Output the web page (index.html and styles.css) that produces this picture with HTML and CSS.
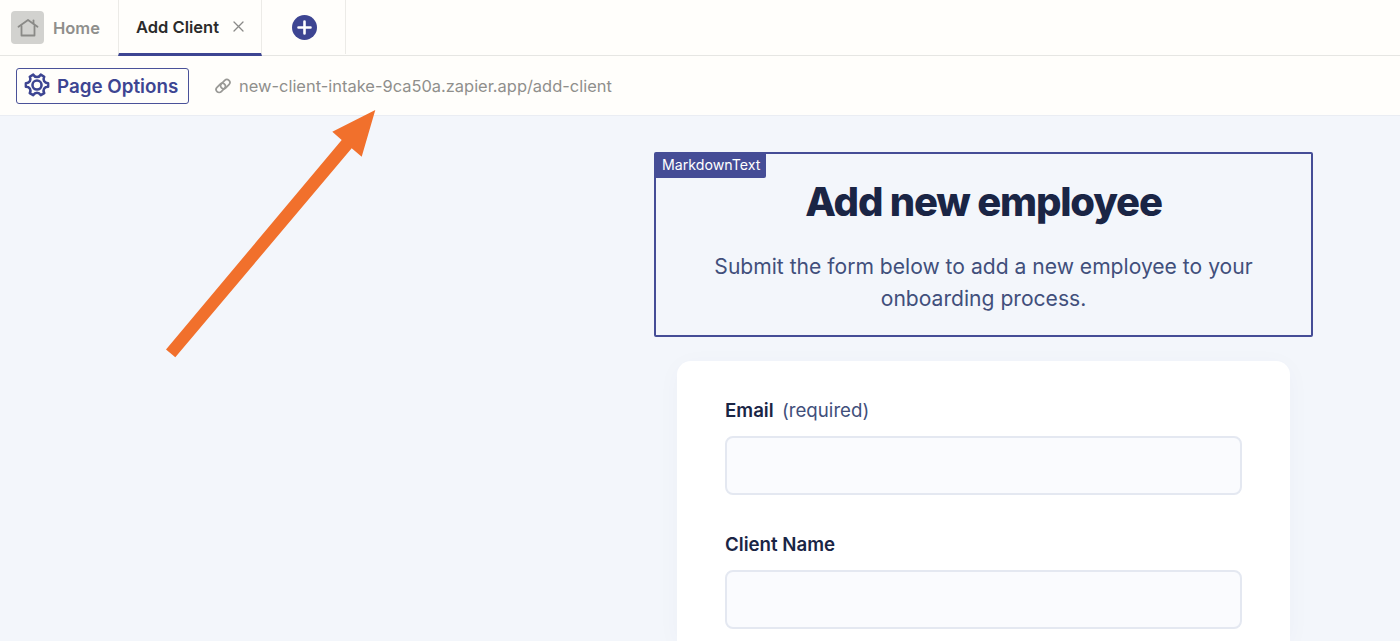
FILE: index.html
```html
<!DOCTYPE html>
<html lang="en">
<head>
  <meta charset="UTF-8" />
  <title>Add Client</title>
  <link rel="stylesheet" href="styles.css">
</head>
<body>

  <div class="tabs">
    <div class="tab tab-home">
      <span class="home-icon">
        <svg width="22" height="20" viewBox="0 0 22 20" fill="none" stroke="#8a8a87" stroke-width="1.800" stroke-linejoin="round" stroke-linecap="round">
          <path d="M1.500 8.800 11 2l9.500 6.800"/>
          <path d="M4.500 8v9.500h13V8"/>
          <path d="M16.500 2.500v3"/>
        </svg>
      </span>
      <span>Home</span>
    </div>
    <div class="tab tab-active">
      <span>Add Client</span>
      <svg class="close" width="11" height="11" viewBox="0 0 11 11" stroke="#8a8a88" stroke-width="1.300" stroke-linecap="round">
        <path d="M1 1l9 9M10 1l-9 9"/>
      </svg>
    </div>
    <div class="tab tab-add">
      <svg width="25" height="25" viewBox="0 0 25 25">
        <circle cx="12.500" cy="12.500" r="12.500" fill="#3d4592"/>
        <path d="M12.500 6.500v12M6.500 12.500h12" stroke="#fff" stroke-width="2.600" stroke-linecap="round"/>
      </svg>
    </div>
  </div>

  <div class="toolbar">
    <button class="options-btn">
      <svg width="28" height="28" viewBox="0 0 26 26" fill="none" stroke="#3d4592" stroke-width="2.400" stroke-linejoin="round">
        <path d="M9.500 2.500c1 1.600 2 2.200 3.500 2.200s2.500-.6 3.500-2.200l3.200 1.900c-.9 1.700-.9 2.800-.1 4.100.8 1.300 1.800 1.900 3.700 1.900v3.200c-1.900 0-2.900.6-3.700 1.900-.8 1.300-.8 2.400.1 4.100l-3.200 1.900c-1-1.600-2-2.200-3.500-2.200s-2.500.6-3.500 2.200l-3.200-1.900c.9-1.700.9-2.800.1-4.100-.8-1.300-1.800-1.900-3.700-1.900v-3.200c1.900 0 2.900-.6 3.700-1.900.8-1.300.8-2.400-.1-4.100z"/>
        <circle cx="13" cy="12.100" r="4.200"/>
      </svg>
      Page Options
    </button>
    <div class="page-url">
      <svg width="18" height="18" viewBox="0 0 24 24" fill="none" stroke="#999996" stroke-width="2.300">
        <rect x="2" y="10.500" width="14" height="8" rx="4" transform="rotate(-45 9 14.500)"/>
        <rect x="8" y="5.500" width="14" height="8" rx="4" transform="rotate(-45 15 9.500)"/>
      </svg>
      <span>new-client-intake-9ca50a.zapier.app/add-client</span>
    </div>
  </div>

  <div class="content">
    <div class="column">
      <div class="markdown-block">
        <span class="block-tag">MarkdownText</span>
        <h1>Add new employee</h1>
        <p>Submit the form below to add a new employee to your onboarding process.</p>
      </div>
      <div class="form-card">
        <div class="field">
          <label><strong>Email</strong> <span>(required)</span></label>
          <div class="input"></div>
        </div>
        <div class="field">
          <label><strong>Client Name</strong></label>
          <div class="input"></div>
        </div>
      </div>
    </div>
  </div>

  <!-- annotation arrow -->
  <svg class="arrow" width="1400" height="641" viewBox="0 0 1400 641">
    <polygon fill="#f1702c" points="166,349.500 175.300,357.300 351.700,148.300 361.700,156.700 375.300,110 332.300,131.700 341.700,140"/>
  </svg>

</body>
</html>
```

FILE: styles.css
```css
* { margin: 0; padding: 0; box-sizing: border-box; }

html, body {
  height: 641px;
  overflow: hidden;
}

body {
  font-family: 'Inter', sans-serif;
  background-color: #f3f6fb;
  color: #1a2545;
  position: relative;
}

/* Tabs */
.tabs {
  display: flex;
  height: 56px;
  background-color: #fffefb;
  border-bottom: 1px solid #e6e6e3;
}

.tab {
  display: flex;
  align-items: center;
  font-size: 16.500px;
  font-weight: 600;
  border-right: 1px solid #ecebe7;
}

.tab-home {
  width: 118px;
  padding-left: 11px;
  gap: 9px;
  color: #8f8f8c;
  border-right: none;
}

.home-icon {
  display: flex;
  align-items: center;
  justify-content: center;
  width: 33px;
  height: 33px;
  background-color: #d2d2cf;
  border-radius: 4px;
}

.tab-active {
  width: 144px;
  height: 56px;
  padding-left: 17px;
  gap: 14px;
  color: #2b2b2b;
  border-left: 1px solid #ecebe7;
  border-bottom: 3px solid #3d4592;
}

.tab-add {
  width: 84px;
  height: 54px;
  justify-content: center;
  padding-left: 1px;
}

/* Toolbar */
.toolbar {
  display: flex;
  align-items: center;
  height: 60px;
  padding-left: 16px;
  padding-top: 1px;
  background-color: #fffefb;
  border-bottom: 1px solid #eaedf3;
}

.options-btn {
  display: flex;
  align-items: center;
  gap: 6px;
  width: 173px;
  height: 36px;
  padding-left: 6px;
  font-family: inherit;
  font-size: 18.800px;
  font-weight: 600;
  color: #3d4592;
  background: none;
  border: 1.500px solid #4a5299;
  border-radius: 3px;
}

.page-url {
  display: flex;
  align-items: center;
  gap: 7px;
  margin-left: 25px;
  font-size: 16.440px;
  color: #8f8f8c;
}

/* Content */
.content {
  display: flex;
  justify-content: flex-end;
  padding: 36px 87px 0 0;
}

.column {
  width: 659px;
}

.markdown-block {
  position: relative;
  height: 185px;
  padding-top: 24px;
  text-align: center;
  border: 2px solid #454d96;
  border-radius: 2px;
}

.block-tag {
  position: absolute;
  top: 0;
  left: 0;
  padding: 1px 6px 0 6px;
  height: 24px;
  font-size: 14.200px;
  line-height: 20px;
  color: #fff;
  background-color: #454d96;
  border-bottom-right-radius: 2px;
}

.markdown-block h1 {
  font-size: 40px;
  font-weight: 800;
  line-height: 48px;
  letter-spacing: -1.200px;
  color: #1a2545;
}

.markdown-block p {
  width: 560px;
  margin: 25px auto 0;
  font-size: 21.100px;
  line-height: 32px;
  color: #414f7b;
}

.form-card {
  height: 280px;
  margin: 24px 23px 0;
  padding: 37px 48px 0 48px;
  background-color: #fff;
  border-radius: 14px 14px 0 0;
  box-shadow: 0 4px 24px rgba(40, 60, 120, 0.03);
}

.field {
  margin-bottom: 37px;
}

.field:last-child {
  margin-bottom: 0;
}

.field label {
  display: block;
  margin-bottom: 12px;
  font-size: 18.700px;
  line-height: 26px;
}

.field strong {
  font-weight: 600;
  margin-right: 3px;
}

.field label span {
  color: #414f7b;
}

.input {
  height: 59px;
  background-color: #fafbfe;
  border: 2px solid #e4e8f1;
  border-radius: 8px;
}

/* Annotation */
.arrow {
  position: absolute;
  top: 0;
  left: 0;
  pointer-events: none;
}
```
